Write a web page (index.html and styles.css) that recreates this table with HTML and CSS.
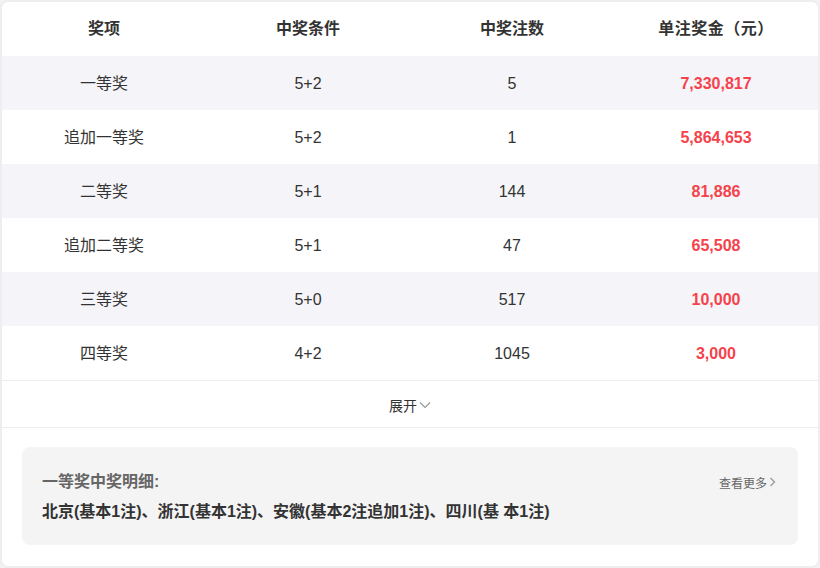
FILE: index.html
```html
<!DOCTYPE html>
<html lang="zh">
<head>
<meta charset="utf-8">
<link rel="stylesheet" href="styles.css">
</head>
<body>
<div class="card">
  <div class="row head">
    <div class="cell">奖项</div>
    <div class="cell">中奖条件</div>
    <div class="cell">中奖注数</div>
    <div class="cell">单注奖金（元）</div>
  </div>
  <div class="row body alt">
    <div class="cell">一等奖</div><div class="cell">5+2</div><div class="cell">5</div><div class="cell money">7,330,817</div>
  </div>
  <div class="row body">
    <div class="cell">追加一等奖</div><div class="cell">5+2</div><div class="cell">1</div><div class="cell money">5,864,653</div>
  </div>
  <div class="row body alt">
    <div class="cell">二等奖</div><div class="cell">5+1</div><div class="cell">144</div><div class="cell money">81,886</div>
  </div>
  <div class="row body">
    <div class="cell">追加二等奖</div><div class="cell">5+1</div><div class="cell">47</div><div class="cell money">65,508</div>
  </div>
  <div class="row body alt">
    <div class="cell">三等奖</div><div class="cell">5+0</div><div class="cell">517</div><div class="cell money">10,000</div>
  </div>
  <div class="row body">
    <div class="cell">四等奖</div><div class="cell">4+2</div><div class="cell">1045</div><div class="cell money">3,000</div>
  </div>
  <div class="expand">
    <span>展开</span>
    <svg class="chev" width="12" height="8" viewBox="0 0 12 8"><path d="M1 1.5 L6 6.5 L11 1.5" fill="none" stroke="#999" stroke-width="1.2"/></svg>
  </div>
  <div class="detail-wrap">
    <div class="detail">
      <div class="detail-top">
        <div class="detail-title">一等奖中奖明细:</div>
        <div class="more">查看更多<svg width="7" height="10" viewBox="0 0 7 10"><path d="M1.5 1 L5.5 5 L1.5 9" fill="none" stroke="#999" stroke-width="1.3"/></svg></div>
      </div>
      <div class="detail-text">北京(基本1注)、浙江(基本1注)、安徽(基本2注追加1注)、四川(基 本1注)</div>
    </div>
  </div>
</div>
</body>
</html>
```
FILE: styles.css
```css
* { box-sizing: border-box; }
html, body { margin: 0; padding: 0; }
body {
  background: #f2f2f2;
  font-family: "Liberation Sans", "Noto Sans CJK SC", sans-serif;
  color: #333;
  width: 820px;
  height: 568px;
}
.card {
  width: 820px;
  height: 568px;
  background: #fff;
  border: 2px solid #eeeeee;
  border-radius: 8px;
  overflow: hidden;
}
.row {
  display: grid;
  grid-template-columns: repeat(4, 1fr);
  height: 54px;
  align-items: center;
}
.row.body { padding-top: 2px; }
.row.alt { background: #f5f5f9; }
.cell {
  text-align: center;
  font-size: 16px;
  line-height: 20px;
}
.head .cell { font-weight: bold; }
.head .cell:last-child { letter-spacing: 0.5px; }
.money { color: #f5424b; font-weight: bold; }
.expand {
  height: 48px;
  border-top: 1px solid #ededed;
  border-bottom: 1px solid #ededed;
  display: flex;
  align-items: center;
  justify-content: center;
  font-size: 14px;
  color: #333;
  gap: 2px;
  padding-top: 2px;
}
.detail-wrap { padding: 19px 20px 0 20px; }
.detail {
  background: #f4f4f4;
  border-radius: 8px;
  height: 98px;
  padding: 24px 22px 0 20px;
}
.detail-top {
  display: flex;
  justify-content: space-between;
  align-items: center;
}
.detail-title {
  font-size: 16px;
  font-weight: bold;
  color: #666;
  line-height: 22px;
}
.more {
  font-size: 12px;
  color: #666;
  display: flex;
  align-items: center;
  gap: 2px;
}
.detail-text {
  margin-top: 8px;
  font-size: 16px;
  font-weight: bold;
  color: #333;
  line-height: 22px;
}
```
